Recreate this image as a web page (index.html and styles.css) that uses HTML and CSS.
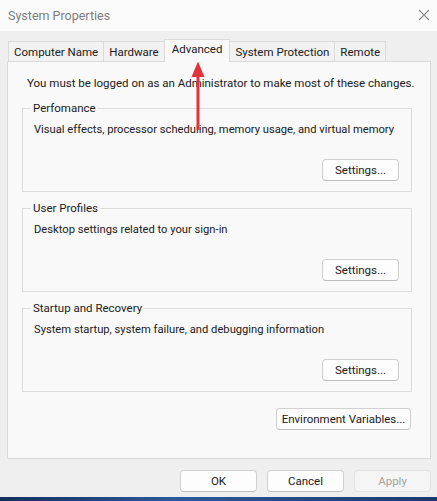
FILE: index.html
```html
<!DOCTYPE html>
<html>
<head>
<meta charset="utf-8">
<link rel="stylesheet" href="styles.css">
</head>
<body>
<div class="window">
  <div class="titlebar">
    <span class="title">System Properties</span>
    <svg class="close" width="12" height="12" viewBox="0 0 12 12"><path d="M1 1 L11 11 M11 1 L1 11" stroke="#8a8a8a" stroke-width="1.1" fill="none"/></svg>
  </div>
  <div class="tabs">
    <div class="tab">Computer Name</div>
    <div class="tab">Hardware</div>
    <div class="tab active">Advanced</div>
    <div class="tab">System Protection</div>
    <div class="tab">Remote</div>
  </div>
  <div class="panel">
    <p class="intro">You must be logged on as an Administrator to make most of these changes.</p>
    <fieldset class="group">
      <legend>Perfomance</legend>
      <p class="desc">Visual effects, processor scheduling, memory usage, and virtual memory</p>
      <div class="row"><button class="btn">Settings...</button></div>
    </fieldset>
    <fieldset class="group">
      <legend>User Profiles</legend>
      <p class="desc">Desktop settings related to your sign-in</p>
      <div class="row"><button class="btn">Settings...</button></div>
    </fieldset>
    <fieldset class="group">
      <legend>Startup and Recovery</legend>
      <p class="desc">System startup, system failure, and debugging information</p>
      <div class="row"><button class="btn">Settings...</button></div>
    </fieldset>
    <div class="envrow"><button class="btn env">Environment Variables...</button></div>
  </div>
  <div class="footer">
    <button class="btn">OK</button>
    <button class="btn">Cancel</button>
    <button class="btn disabled">Apply</button>
  </div>
</div>
<div class="desktop"></div>
<svg class="arrow" width="20" height="72" viewBox="0 0 20 72">
  <path d="M8.5 15 L11.5 15 L11.5 69 L8.5 69 Z" fill="#e2333b"/>
  <path d="M10 0.5 L16.5 16 L3.5 16 Z" fill="#e2333b"/>
</svg>
</body>
</html>
```
FILE: styles.css
```css
html, body {
  margin: 0;
  padding: 0;
}
body {
  width: 437px;
  height: 501px;
  overflow: hidden;
  background: #f0f0f0;
  font-family: Roboto, "Liberation Sans", Arial, sans-serif;
  font-size: 11.5px;
  color: #202020;
  position: relative;
}
.window {
  height: 497px;
  background: #efefef;
  display: flex;
  flex-direction: column;
  border-bottom-left-radius: 6px;
}
.titlebar {
  height: 31px;
  background: #fbfbfb;
  display: flex;
  align-items: center;
  justify-content: space-between;
  padding: 0 7px 0 8px;
  flex-shrink: 0;
}
.title {
  font-size: 12.5px;
  color: #7c7c7c;
}
.close {
  margin-top: -2px;
}
.tabs {
  display: flex;
  align-items: flex-end;
  padding: 8px 0 0 8px;
  height: 22px;
  position: relative;
  z-index: 1;
}
.tab {
  height: 19px;
  line-height: 20px;
  padding: 0 5px;
  border: 1px solid #dadada;
  border-bottom: none;
  background: #f2f2f2;
  white-space: nowrap;
}
.tab + .tab {
  margin-left: -1px;
}
.tab.active {
  height: 22px;
  line-height: 18px;
  background: #f9f9f9;
  margin-bottom: -1px;
  padding: 0 7px;
  position: relative;
}
.panel {
  margin: 0 6px 0 7px;
  height: 396px;
  background: #f9f9f9;
  border: 1px solid #dadada;
  padding: 0 18px 0 14px;
}
.intro {
  margin: 14px 0 0 5px;
  line-height: 15px;
  white-space: nowrap;
}
.group {
  margin: 10px 0 0 0;
  padding: 0 12px 10px 10px;
  border: 1px solid #dcdcdc;
  min-width: 0;
}
.group + .group {
  margin-top: 9px;
}
.group legend {
  padding: 0 2px;
  margin-left: -2px;
  line-height: 15px;
}
.desc {
  margin: 6px 0 0 1px;
  line-height: 15px;
  white-space: nowrap;
  font-size: 11.2px;
}
.row {
  display: flex;
  justify-content: flex-end;
  margin-top: 22px;
}
.btn {
  width: 77px;
  height: 22px;
  font-family: inherit;
  font-size: 11.5px;
  color: #202020;
  background: #fdfdfd;
  border: 1px solid #d0d0d0;
  border-bottom-color: #bdbdbd;
  border-radius: 4px;
  padding: 0;
}
.envrow {
  display: flex;
  justify-content: flex-end;
  margin-top: 16px;
}
.btn.env {
  width: 135px;
  margin-right: 1px;
}
.footer {
  display: flex;
  justify-content: flex-end;
  gap: 10px;
  padding: 11px 6px 0 0;
}
.btn.disabled {
  background: #f5f5f5;
  border-color: #e3e3e3;
  color: #a3a3a3;
}
.desktop {
  height: 4px;
  background: linear-gradient(90deg, #14305e, #2a5a9a 40%, #1a3a6d);
}
.arrow {
  position: absolute;
  left: 188px;
  top: 61px;
  z-index: 5;
}
```
